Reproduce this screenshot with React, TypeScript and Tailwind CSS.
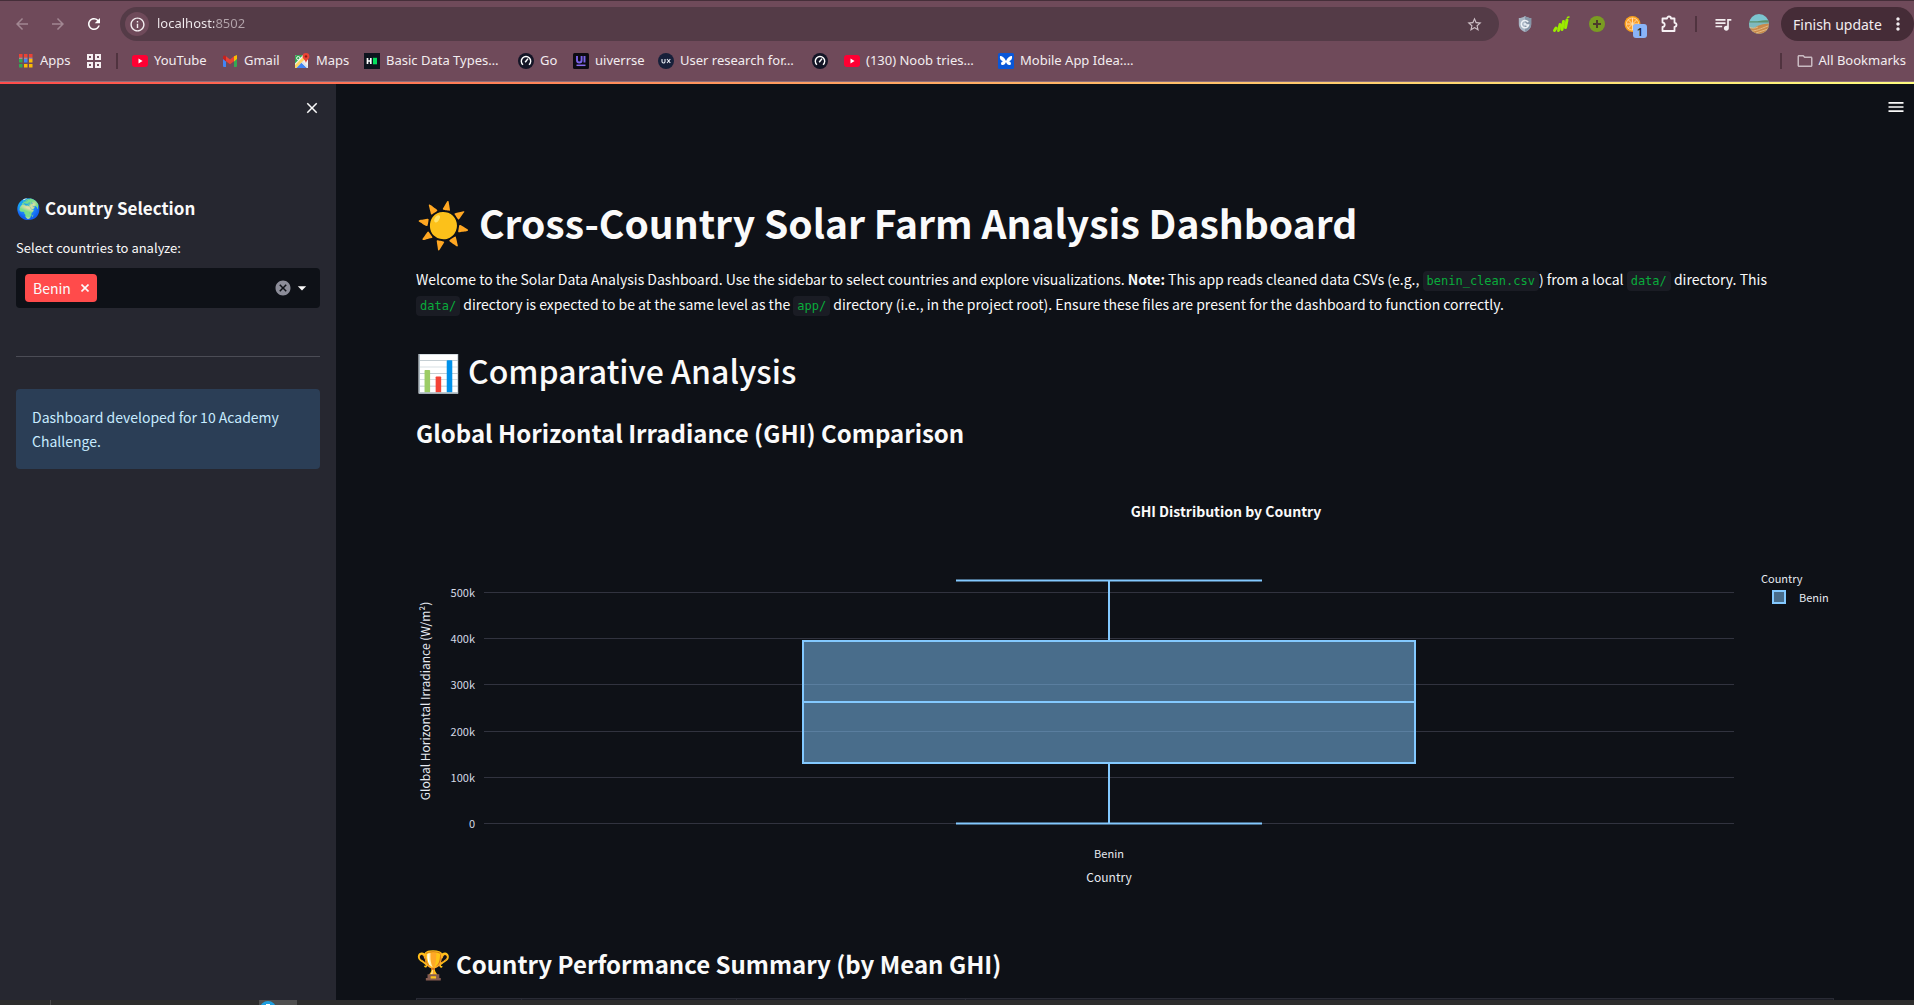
import type { ReactNode } from "react";
import {
  MdArrowBack,
  MdArrowForward,
  MdArrowDropDown,
  MdCancel,
  MdClose,
  MdMenu,
  MdMoreVert,
  MdOutlineFolder,
  MdOutlineInfo,
  MdQueueMusic,
  MdRefresh,
  MdStarBorder,
} from "react-icons/md";

function AppsIcon() {
  const colors = ["#ea4335", "#ea4335", "#ea4335", "#34a853", "#4285f4", "#fbbc04", "#34a853", "#fbbc04", "#fbbc04"];
  return (
    <svg viewBox="0 0 16 16" className="size-4">
      {colors.map((c, i) => (
        <rect key={i} x={1 + (i % 3) * 5} y={1 + Math.floor(i / 3) * 5} width="3.5" height="3.5" fill={c} />
      ))}
      <path d="M1 5.2h3.500M6 5.2h3.500M11 5.2h3.500" stroke="#cfc4c9" strokeWidth="0.8" />
    </svg>
  );
}

function GridIcon() {
  return (
    <svg viewBox="0 0 16 16" className="size-4" fill="none" stroke="#f4eef1" strokeWidth="2">
      <rect x="2" y="2" width="4" height="4" />
      <rect x="10" y="2" width="4" height="4" />
      <rect x="2" y="10" width="4" height="4" />
      <rect x="10" y="10" width="4" height="4" />
    </svg>
  );
}

function YouTubeIcon() {
  return (
    <svg viewBox="0 0 16 16" className="size-4">
      <rect y="2" width="16" height="12" rx="3" fill="#ff0033" />
      <path d="M6.5 5.6v4.8L10.6 8z" fill="#fff" />
    </svg>
  );
}

function GmailIcon() {
  return (
    <svg viewBox="0 0 16 16" className="size-4">
      <path d="M1 5v8a1 1 0 0 0 1 1h2V7z" fill="#4285f4" />
      <path d="M15 5v8a1 1 0 0 1-1 1h-2V7z" fill="#34a853" />
      <path d="M12 3.2 15 2v4l-3 2.4z" fill="#fbbc04" />
      <path d="M4 3.2v5L8 11.2l4-3v-5L8 6.4z" fill="#ea4335" />
      <path d="M1 4.2C1 2.5 2.800 2 4 3.200V8.400L1 6z" fill="#c5221f" />
    </svg>
  );
}

function MapsIcon() {
  return (
    <svg viewBox="0 0 16 16" className="size-4">
      <rect x="1" y="2" width="13" height="13" rx="1.500" fill="#f1f3f4" />
      <path d="M1 3.500A1.500 1.500 0 0 1 2.500 2H9L1 10.500z" fill="#34a853" />
      <path d="M1 12 11 2l2 2L2.500 15H1z" fill="#fdd663" />
      <path d="M2.500 15 7.500 9.800l5.500 5.200z" fill="#4285f4" />
      <path d="M7.500 9.800 9 8.200l5 5.300V15h-1z" fill="#dfe3e8" />
      <circle cx="4.300" cy="5.200" r="1.700" fill="none" stroke="#fff" strokeWidth="0.900" />
      <path d="M12 0a3.400 3.400 0 0 0-3.400 3.400C8.600 6 11.400 6.500 12 10c.6-3.500 3.400-4 3.400-6.600A3.400 3.400 0 0 0 12 0z" fill="#ea4335" />
      <circle cx="12" cy="3.400" r="1.200" fill="#8c1d13" />
    </svg>
  );
}

function RankIcon() {
  return (
    <svg viewBox="0 0 16 16" className="size-4">
      <rect width="16" height="16" fill="#0e141e" />
      <path d="M3.500 5v6M6.800 5v6M3.500 8h3.300" stroke="#fff" strokeWidth="1.700" />
      <rect x="9" y="4.800" width="4" height="6.500" fill="#05e05f" />
    </svg>
  );
}

function GaugeIcon() {
  return (
    <svg viewBox="0 0 16 16" className="size-4">
      <circle cx="8" cy="8" r="8" fill="#141526" />
      <path d="M5 11.800a4.700 4.700 0 1 1 6 0" fill="none" stroke="#fff" strokeWidth="1.400" />
      <path d="M7.200 9.200 10 5.600" stroke="#fff" strokeWidth="1.500" />
    </svg>
  );
}

function UiverseIcon() {
  return (
    <svg viewBox="0 0 16 16" className="size-4">
      <rect width="16" height="16" rx="1.500" fill="#0c0b12" />
      <path d="M4 3v4.200a2.300 2.300 0 0 0 4.600 0V3M11.500 3v6.600" fill="none" stroke="#7a63e8" strokeWidth="1.900" />
      <path d="M3.500 12.300h9" stroke="#8a6cf0" strokeWidth="1.500" />
    </svg>
  );
}

function UxIcon() {
  return (
    <svg viewBox="0 0 16 16" className="size-4">
      <circle cx="8" cy="8" r="8" fill="#17203a" />
      <path d="M4 6v2.500a1.500 1.500 0 0 0 3 0V6M9 6l3.300 4M12.300 6 9 10" fill="none" stroke="#e9edf5" strokeWidth="1.100" />
    </svg>
  );
}

function ButterflyIcon() {
  return (
    <svg viewBox="0 0 16 16" className="size-4">
      <rect width="16" height="16" rx="1.500" fill="#0a57d8" />
      <path d="M8 8C6.500 4.500 4 2.800 2 3c-.6 2.500.8 4.800 3 5.200-1.600.4-2.300 1.700-1.800 3.200C5 13 7.200 11.500 8 9c.8 2.500 3 4 4.800 2.400.5-1.500-.2-2.800-1.800-3.200 2.200-.4 3.600-2.700 3-5.200-2-.2-4.500 1.500-6 5z" fill="#fff" />
    </svg>
  );
}

function ShieldIcon() {
  return (
    <svg viewBox="0 0 20 20" className="size-5">
      <path d="M10 2c2 1.500 4 2 6.200 2v6c0 4-2.600 6.600-6.200 8-3.600-1.400-6.200-4-6.200-8V4C6 4 8 3.500 10 2z" fill="#a9b6c4" />
      <path d="M10 2v16c3.600-1.400 6.200-4 6.200-8V4C14 4 12 3.500 10 2z" fill="#8796a8" />
      <path d="M13.200 8.200A3.700 3.700 0 1 0 13.600 11h-3" fill="none" stroke="#eef2f6" strokeWidth="1.500" />
      <circle cx="10" cy="10" r="1.500" fill="#dfe6ee" />
    </svg>
  );
}

function BarsIcon() {
  return (
    <svg viewBox="0 0 20 20" className="size-5" stroke="#9bea00" strokeWidth="3" strokeLinecap="round">
      <path d="M3.500 16.500 5 14M7.500 16.500 9 10.500M11 15.500l1.500-8M14.500 13.500 16 6" />
      <path d="M16.500 3.500 18 3" strokeWidth="1.500" />
    </svg>
  );
}

function PlusIcon() {
  return (
    <svg viewBox="0 0 20 20" className="size-5">
      <circle cx="10" cy="10" r="8" fill="#7a9c22" />
      <path d="M10 6v8M6 10h8" stroke="#4d3a2a" strokeWidth="2" />
    </svg>
  );
}

function OrangeIcon() {
  return (
    <svg viewBox="0 0 20 20" className="size-5">
      <circle cx="9.500" cy="10" r="8" fill="#f9a01b" />
      <circle cx="9.500" cy="10" r="6.500" fill="#ffd9a0" />
      <circle cx="9.500" cy="10" r="5.800" fill="#fb9d2a" />
      <path d="M9.500 4v12M3.500 10h12M5.200 5.800l8.600 8.400M13.800 5.800l-8.600 8.400" stroke="#ffe2b5" strokeWidth="0.900" />
    </svg>
  );
}

function PuzzleIcon() {
  return (
    <svg viewBox="0 0 20 20" className="size-5" fill="none" stroke="#f7f1f4" strokeWidth="1.800" strokeLinejoin="round">
      <path d="M3.500 4.500h4.500a2 2 0 0 1 4 0h3.500v4.300a2 2 0 0 1 0 4V17h-12v-4a2.200 2.200 0 0 0 0-4.400z" />
    </svg>
  );
}

function AvatarIcon() {
  return (
    <svg viewBox="0 0 20 20" className="size-5">
      <defs>
        <clipPath id="avatar-clip">
          <circle cx="10" cy="10" r="10" />
        </clipPath>
      </defs>
      <g clipPath="url(#avatar-clip)">
        <rect width="20" height="20" fill="#7cc4cf" />
        <path d="M0 7.500c3-1 6 .5 10-.5s7-1 10-.5V9H0z" fill="#5b8f6a" />
        <path d="M0 8.500h20V11c-5 .5-8 1-11 3-3 1-6 1-9 .5z" fill="#7fb9bd" />
        <path d="M20 9.500c-6 .5-11 1.500-13 3.500-1 1.300-4 1.500-7 1V20h20z" fill="#c98a4b" />
        <path d="M0 13c3 1.500 6 1.500 9 0M3 17c4 0 8-2 16-5M7 19c4-1 8-3 12-4" stroke="#e8c48f" strokeWidth="0.800" fill="none" />
      </g>
    </svg>
  );
}

type BookmarkProps = { icon: ReactNode; label?: string; name?: string; width: string };

function Bookmark({ icon, label, name, width }: BookmarkProps) {
  return (
    <a href="#" aria-label={name} className={`flex shrink-0 items-center gap-1.5 whitespace-nowrap ${width}`}>
      {icon}
      {label}
    </a>
  );
}

function BrowserChrome() {
  return (
    <header className="shrink-0 border-t border-b border-t-[#452e39] border-b-[#8b6f7c] bg-[#6f4a5a] pb-1.5 font-['Noto_Sans',sans-serif] text-[13px] text-[#f3edf0]">
      <div className="flex h-[46px] items-center">
        <div className="flex w-[120px] shrink-0 items-center gap-[18px] pl-[13px] text-[18px]">
          <button aria-label="Back" className="text-[#a28792]">
            <MdArrowBack />
          </button>
          <button aria-label="Forward" className="text-[#a28792]">
            <MdArrowForward />
          </button>
          <button aria-label="Reload" className="text-white">
            <MdRefresh />
          </button>
        </div>
        <div className="flex h-[34px] grow items-center gap-2 rounded-full bg-[#543b47] pr-4 pl-[5px]">
          <button aria-label="Site information" className="grid size-6 place-items-center rounded-full bg-[#6f4a5a] text-[17px]">
            <MdOutlineInfo />
          </button>
          <input
            aria-label="Address"
            defaultValue="localhost:8502"
            className="grow bg-[linear-gradient(90deg,#f3edf0_57px,#b3a4ab_57px)] bg-clip-text text-[13px] text-transparent outline-none"
          />
          <button aria-label="Bookmark this tab" className="text-[17px] text-[#cdbfc6]">
            <MdStarBorder />
          </button>
        </div>
        <div className="flex shrink-0 items-center gap-4 pl-4">
          <button aria-label="Shield"><ShieldIcon /></button>
          <button aria-label="Statistics"><BarsIcon /></button>
          <button aria-label="Add"><PlusIcon /></button>
          <button aria-label="Orange, 1 notice" className="relative">
            <OrangeIcon />
            <span className="absolute top-2.5 left-2.5 grid size-3.5 place-items-center rounded-[3px] bg-[#8ab4f8] text-[11px] leading-none font-semibold text-[#1d2430]">
              1
            </span>
          </button>
          <button aria-label="Extensions"><PuzzleIcon /></button>
          <span className="h-4 w-0.5 bg-[#50333f]" />
          <button aria-label="Media" className="text-[20px]"><MdQueueMusic /></button>
          <button aria-label="Profile"><AvatarIcon /></button>
        </div>
        <button className="ml-3 flex h-[34px] w-[133px] shrink-0 items-center gap-0.5 rounded-full bg-[#452c37] pl-3 text-[14px]">
          <span className="w-[93px] text-left">Finish update</span>
          <MdMoreVert className="text-[20px]" />
        </button>
      </div>
      <nav className="flex h-7 items-center pl-[18px]">
        <Bookmark icon={<AppsIcon />} label="Apps" width="w-[68px]" />
        <Bookmark icon={<GridIcon />} name="Tab groups" width="w-[30px]" />
        <span className="mr-3.5 h-4 w-0.5 bg-[#50333f]" />
        <Bookmark icon={<YouTubeIcon />} label="YouTube" width="w-[90px]" />
        <Bookmark icon={<GmailIcon />} label="Gmail" width="w-[72px]" />
        <Bookmark icon={<MapsIcon />} label="Maps" width="w-[70px]" />
        <Bookmark icon={<RankIcon />} label="Basic Data Types…" width="w-[154px]" />
        <Bookmark icon={<GaugeIcon />} label="Go" width="w-[55px]" />
        <Bookmark icon={<UiverseIcon />} label="uiverrse" width="w-[85px]" />
        <Bookmark icon={<UxIcon />} label="User research for…" width="w-[154px]" />
        <Bookmark icon={<GaugeIcon />} name="Speed test" width="w-8" />
        <Bookmark icon={<YouTubeIcon />} label="(130) Noob tries…" width="w-[154px]" />
        <Bookmark icon={<ButterflyIcon />} label="Mobile App Idea:…" width="w-[154px]" />
        <div className="ml-auto flex items-center pr-2">
          <span className="mr-3.5 h-4 w-0.5 bg-[#50333f]" />
          <button className="flex items-center gap-1">
            <MdOutlineFolder className="text-[18px] text-[#c9bac1]" />
            All Bookmarks
          </button>
        </div>
      </nav>
    </header>
  );
}

function Sidebar() {
  return (
    <aside className="w-[336px] shrink-0 bg-[#262730] px-4">
      <div className="-mr-px flex h-12 items-center justify-end">
        <button aria-label="Close sidebar" className="text-[18px]">
          <MdClose />
        </button>
      </div>
      <h2 className="mt-[62px] flex h-7 items-center gap-1 text-[17px] font-bold">
        <span className="text-xl">🌍</span> Country Selection
      </h2>
      <label htmlFor="countries" className="mt-4 block text-[13px] leading-5">
        Select countries to analyze:
      </label>
      <div className="mt-2.5 flex h-10 items-center rounded bg-[#0e1117] pr-2 pl-[9px]">
        <span className="flex h-7 items-center gap-2.5 rounded bg-[#ff4b4b] pr-2 pl-2 text-sm">
          Benin
          <button aria-label="Remove Benin">
            <svg viewBox="0 0 8 8" className="size-2" stroke="currentColor" strokeWidth="1.600">
              <path d="M0.500 0.500 7.500 7.500M7.500 0.500 0.500 7.500" />
            </svg>
          </button>
        </span>
        <input id="countries" className="min-w-0 grow bg-transparent px-2 outline-none" />
        <button aria-label="Clear all" className="text-[18px] text-[#8c8d99]">
          <MdCancel />
        </button>
        <button aria-label="Open list" className="text-[20px]">
          <MdArrowDropDown />
        </button>
      </div>
      <hr className="mt-12 border-[#4b4c55]" />
      <div className="mt-8 rounded bg-[#2b3e56] p-4 text-sm leading-6 text-[#c7ebff]">
        Dashboard developed for 10 Academy Challenge.
      </div>
    </aside>
  );
}

function Code({ children }: { children: ReactNode }) {
  return (
    <code className="rounded bg-[#1a1c24] px-1 py-[3px] font-['DejaVu_Sans_Mono',monospace] text-xs text-[#09ab3b]">
      {children}
    </code>
  );
}

const ticks = [
  { label: "500k", y: 112 },
  { label: "400k", y: 158 },
  { label: "300k", y: 204 },
  { label: "200k", y: 251 },
  { label: "100k", y: 297 },
  { label: "0", y: 343 },
];

function BoxPlot() {
  return (
    <svg viewBox="0 0 1418 450" className="block h-auto w-full" role="img" aria-label="GHI Distribution by Country">
      {ticks.map((t) => (
        <g key={t.label}>
          <path d={`M68 ${t.y + 0.5}H1318`} stroke="#31333f" />
          <text x="59" y={t.y + 5} textAnchor="end" fontSize="11" fill="#d5dae5">
            {t.label}
          </text>
        </g>
      ))}
      <g stroke="#83c9ff" strokeWidth="2">
        <rect x="387" y="161" width="612" height="122" fill="#83c9ff" fillOpacity="0.5" />
        <path d="M387 222h612M693 161V101M693 283v60M540 100.500h306M540 343.500h306" />
        <rect x="1357" y="111" width="12" height="12" fill="#83c9ff" fillOpacity="0.5" />
      </g>
      <g fill="#e6eaf1">
        <text x="810" y="37" textAnchor="middle" fontSize="14" fontWeight="700" fill="#fafafa">
          GHI Distribution by Country
        </text>
        <text x="693" y="378" textAnchor="middle" fontSize="11">
          Benin
        </text>
        <text x="693" y="402" textAnchor="middle" fontSize="12">
          Country
        </text>
        <text x="14" y="221" textAnchor="middle" fontSize="12" transform="rotate(-90 14 221)">
          Global Horizontal Irradiance (W/m²)
        </text>
        <text x="1345" y="103" fontSize="11">
          Country
        </text>
        <text x="1383" y="122" fontSize="11">
          Benin
        </text>
      </g>
    </svg>
  );
}

function Dashboard() {
  return (
    <main className="relative min-w-0 grow px-20">
      <button aria-label="Menu" className="absolute top-[13px] right-2 text-[20px]">
        <MdMenu />
      </button>
      <h1 className="mt-28 flex h-[52px] items-center gap-2 text-[39px] font-bold">
        <span className="text-[44px]">☀️</span> Cross-Country Solar Farm Analysis Dashboard
      </h1>
      <p className="mt-[19px] text-sm leading-[25px]">
        Welcome to the Solar Data Analysis Dashboard. Use the sidebar to select countries and explore visualizations.{" "}
        <strong>Note:</strong> This app reads cleaned data CSVs (e.g., <Code>benin_clean.csv</Code>) from a local{" "}
        <Code>data/</Code> directory. This
        <br />
        <Code>data/</Code> directory is expected to be at the same level as the <Code>app/</Code> directory (i.e., in
        the project root). Ensure these files are present for the dashboard to function correctly.
      </p>
      <h2 className="mt-[31px] flex h-11 items-center gap-[7px] text-[32px] font-medium">
        <span className="text-4xl">📊</span> Comparative Analysis
      </h2>
      <h3 className="mt-[23px] mb-[29px] h-9 text-2xl leading-9 font-bold">Global Horizontal Irradiance (GHI) Comparison</h3>
      <BoxPlot />
      <h3 className="mt-4 flex h-9 items-center gap-[5px] text-2xl font-bold">
        <span className="text-[28px]">🏆</span> Country Performance Summary (by Mean GHI)
      </h3>
      <table aria-label="Country performance" className="mt-4 h-8 w-full table-fixed border border-[#292b35] bg-[#1a1c24]">
        <thead>
          <tr>
            <th className="w-[105px] border border-[#292b35]" />
            <th className="w-[215px] border border-[#292b35]" />
            <th className="w-[229px] border border-[#292b35]" />
            <th className="border border-[#292b35]" />
          </tr>
        </thead>
      </table>
    </main>
  );
}

export default function App() {
  return (
    <div className="flex h-screen flex-col overflow-hidden bg-[#0e1117] font-['Noto_Sans_CJK_SC',sans-serif] text-[#fafafa]">
      <BrowserChrome />
      <div className="h-0.5 shrink-0 bg-linear-to-r from-[#ff4b4b] to-[#fffd80]" />
      <div className="flex min-h-0 grow overflow-hidden">
        <Sidebar />
        <Dashboard />
      </div>
      <footer className="flex h-[5px] shrink-0 overflow-hidden bg-[#2d2d2d] pl-[50px]">
        <span className="w-px bg-[#4a4a4a]" />
        <span className="ml-[208px] w-[38px] bg-[#4f4f4f]">
          <svg viewBox="0 0 38 5" className="block h-[5px] w-full">
            <circle cx="9" cy="9" r="8" fill="#1d9fe0" />
            <path d="M7 4h4v1H7z" fill="#fff" />
          </svg>
        </span>
      </footer>
    </div>
  );
}
